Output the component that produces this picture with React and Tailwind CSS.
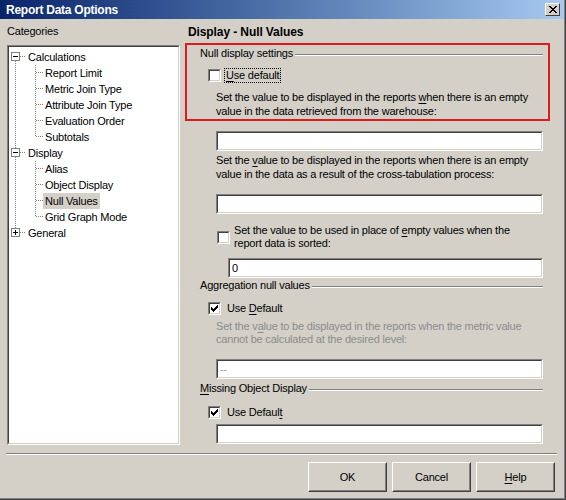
import React from "react";

const DOT = "1 1";

function TreeGutterRoot({ expander, up, down }) {
  return (
    <svg width="17" height="16" className="shrink-0" shapeRendering="crispEdges">
      <line x1="6.5" y1={up ? 0 : 8} x2="6.5" y2={down ? 16 : 8} stroke="#808080" strokeDasharray={DOT} />
      <line x1="11" y1="7.5" x2="17" y2="7.5" stroke="#808080" strokeDasharray={DOT} />
      <rect x="2.5" y="3.5" width="8" height="8" fill="#fff" stroke="#808080" />
      <line x1="4" y1="7.5" x2="9" y2="7.5" stroke="#000" />
      {expander === "plus" && <line x1="6.5" y1="5" x2="6.5" y2="10" stroke="#000" />}
    </svg>
  );
}

function TreeGutterChild({ last }) {
  return (
    <svg width="34" height="16" className="shrink-0" shapeRendering="crispEdges">
      <line x1="6.5" y1="0" x2="6.5" y2="16" stroke="#808080" strokeDasharray={DOT} />
      <line x1="26.5" y1="0" x2="26.5" y2={last ? 8 : 16} stroke="#808080" strokeDasharray={DOT} />
      <line x1="27" y1="7.5" x2="34" y2="7.5" stroke="#808080" strokeDasharray={DOT} />
    </svg>
  );
}

const tree = [
  { label: "Calculations", root: true, expander: "minus", up: false, down: true },
  { label: "Report Limit" },
  { label: "Metric Join Type" },
  { label: "Attribute Join Type" },
  { label: "Evaluation Order" },
  { label: "Subtotals", last: true },
  { label: "Display", root: true, expander: "minus", up: true, down: true },
  { label: "Alias" },
  { label: "Object Display" },
  { label: "Null Values", selected: true },
  { label: "Grid Graph Mode", last: true },
  { label: "General", root: true, expander: "plus", up: true, down: false },
];

function Sunken({ className = "", innerClass = "", children }) {
  return (
    <div className={`border border-t-[#808080] border-l-[#808080] border-b-white border-r-white ${className}`}>
      <div className={`h-full w-full border border-t-[#404040] border-l-[#404040] border-b-[#d4d0c8] border-r-[#d4d0c8] bg-white ${innerClass}`}>
        {children}
      </div>
    </div>
  );
}

function CheckBox({ checked }) {
  return (
    <Sunken className="w-[13px] h-[13px] shrink-0">
      {checked && (
        <svg width="9" height="9" shapeRendering="crispEdges">
          <path d="M1 3h1v3H1zM2 4h1v3H2zM3 5h1v3H3zM4 4h1v3H4zM5 3h1v3H5zM6 2h1v3H6zM7 1h1v3H7z" fill="#000" />
        </svg>
      )}
    </Sunken>
  );
}

function TextBox({ className = "", value = "", muted }) {
  return (
    <Sunken className={`h-[20px] ${className}`} innerClass="flex items-center px-[2px]">
      <span className={`leading-[14px] ${muted ? "text-[#9a9a9a]" : "text-black"}`}>{value}</span>
    </Sunken>
  );
}

function GroupTitle({ children, className = "" }) {
  return (
    <div className={`flex items-center h-[14px] ${className}`}>
      <span className="leading-[14px] whitespace-nowrap">{children}</span>
      <div className="flex-1 ml-[2px] mt-[4px] border-t border-b border-t-[#808080] border-b-white" />
    </div>
  );
}

function Button({ children }) {
  return (
    <div className="w-[79px] h-[30px] border border-t-white border-l-white border-b-[#404040] border-r-[#404040]">
      <div className="h-full w-full border border-t-[#d4d0c8] border-l-[#d4d0c8] border-b-[#808080] border-r-[#808080] flex items-center justify-center">
        <span className="leading-[14px]">{children}</span>
      </div>
    </div>
  );
}

export default function App() {
  return (
    <div className="w-[566px] h-[500px] bg-[#d4d0c8] border-r border-b border-[#404040] font-['Liberation_Sans',Arial,sans-serif] text-[11px] tracking-[-0.2px] text-black overflow-hidden">
      <div className="h-full w-full border-r border-b border-[#808080] flex flex-col">
        {/* title bar */}
        <div className="h-[19px] shrink-0 flex items-center bg-gradient-to-r from-[#0a246a] to-[#a6caf0] pl-[6px] pr-[4px]">
          <span className="text-white font-bold text-[12px] tracking-[-0.25px] leading-[14px]">Report Data Options</span>
          <div className="ml-auto w-[15px] h-[13px] bg-[#d4d0c8] border border-t-white border-l-white border-b-[#404040] border-r-[#404040] flex items-center justify-center">
            <svg width="8" height="7" shapeRendering="crispEdges">
              <path d="M0 0h2v1H0zM6 0h2v1H6zM1 1h2v1H1zM5 1h2v1H5zM2 2h4v1H2zM3 3h2v1H3zM2 4h4v1H2zM1 5h2v1H1zM5 5h2v1H5zM0 6h2v1H0zM6 6h2v1H6z" fill="#000" />
            </svg>
          </div>
        </div>

        {/* body */}
        <div className="h-[434px] shrink-0 flex">
          {/* categories */}
          <div className="ml-[7px] w-[173px] flex flex-col">
            <div className="mt-[5px] h-[14px] leading-[14px]">Categories</div>
            <Sunken className="mt-[7px] h-[400px]" innerClass="pt-[2px]">
              {tree.map((row) => (
                <div key={row.label} className="h-[16px] flex items-center">
                  {row.root ? (
                    <TreeGutterRoot expander={row.expander} up={row.up} down={row.down} />
                  ) : (
                    <TreeGutterChild last={row.last} />
                  )}
                  <span
                    className={`h-[16px] leading-[16px] px-[2px] whitespace-nowrap ${row.selected ? "bg-[#d4d0c8]" : ""}`}
                  >
                    {row.label}
                  </span>
                </div>
              ))}
            </Sunken>
          </div>

          {/* settings page */}
          <div className="ml-[5px] w-[365px] flex flex-col">
            <div className="mt-[6px] h-[14px] pl-[3px] leading-[14px] font-bold text-[12px] tracking-[-0.1px]">
              Display - Null Values
            </div>

            <div className="mt-[4px] h-[78px] border-2 border-[#dc1c1c] pr-[5px]">
              <GroupTitle className="mt-[1px] ml-[13px]">Null display settings</GroupTitle>
              <div className="mt-[9px] ml-[21px] flex items-center h-[13px]">
                <CheckBox />
                <span className="ml-[3px] px-[1px] h-[15px] leading-[13px] border border-dotted border-black">
                  <u className="underline-offset-[2px]">U</u>se default
                </span>
              </div>
              <div className="mt-[8px] ml-[29px] leading-[14px] whitespace-nowrap">
                Set the value to be displayed in the reports <u className="underline-offset-[2px]">w</u>hen there is an empty
                <br />
                value in the data retrieved from the warehouse:
              </div>
            </div>

            <TextBox className="mt-[10px] ml-[31px] w-[327px]" />
            <div className="mt-[2px] ml-[31px] leading-[14px] whitespace-nowrap">
              Set the <u className="underline-offset-[2px]">v</u>alue to be displayed in the reports when there is an empty
              <br />
              value in the data as a result of the cross-tabulation process:
            </div>
            <TextBox className="mt-[13px] ml-[31px] w-[327px]" />

            <div className="mt-[10px] ml-[32px] flex items-center">
              <CheckBox />
              <div className="ml-[4px] leading-[13px] whitespace-nowrap">
                Set the value to be used in place of <u className="underline-offset-[2px]">e</u>mpty values when the
                <br />
                report data is sorted:
              </div>
            </div>
            <TextBox className="mt-[8px] ml-[43px] w-[315px]" value="0" />

            <GroupTitle className="ml-[15px] w-[343px]">Aggregation null values</GroupTitle>
            <div className="mt-[10px] ml-[23px] flex items-center h-[13px]">
              <CheckBox checked />
              <span className="ml-[6px] leading-[13px]">
                Use <u className="underline-offset-[2px]">D</u>efault
              </span>
            </div>
            <div className="mt-[5px] ml-[31px] leading-[13px] whitespace-nowrap text-[#8c8c8c]">
              Set the v<u className="underline-offset-[2px]">a</u>lue to be displayed in the reports when the metric value
              <br />
              cannot be calculated at the desired level:
            </div>
            <TextBox className="mt-[13px] ml-[31px] w-[327px]" value="--" muted />

            <GroupTitle className="mt-[2px] ml-[15px] w-[343px]">
              <u className="underline-offset-[2px]">M</u>issing Object Display
            </GroupTitle>
            <div className="mt-[11px] ml-[23px] flex items-center h-[13px]">
              <CheckBox checked />
              <span className="ml-[6px] leading-[13px]">
                Use Defaul<u className="underline-offset-[2px]">t</u>
              </span>
            </div>
            <TextBox className="mt-[5px] ml-[31px] w-[327px]" />
          </div>
        </div>

        {/* separator */}
        <div className="ml-[6px] w-[551px] border-t border-b border-t-[#808080] border-b-white" />

        {/* buttons */}
        <div className="mt-[7px] flex justify-end gap-[5px] pr-[9px]">
          <Button>OK</Button>
          <Button>Cancel</Button>
          <Button>
            <u className="underline-offset-[2px]">H</u>elp
          </Button>
        </div>
      </div>
    </div>
  );
}
